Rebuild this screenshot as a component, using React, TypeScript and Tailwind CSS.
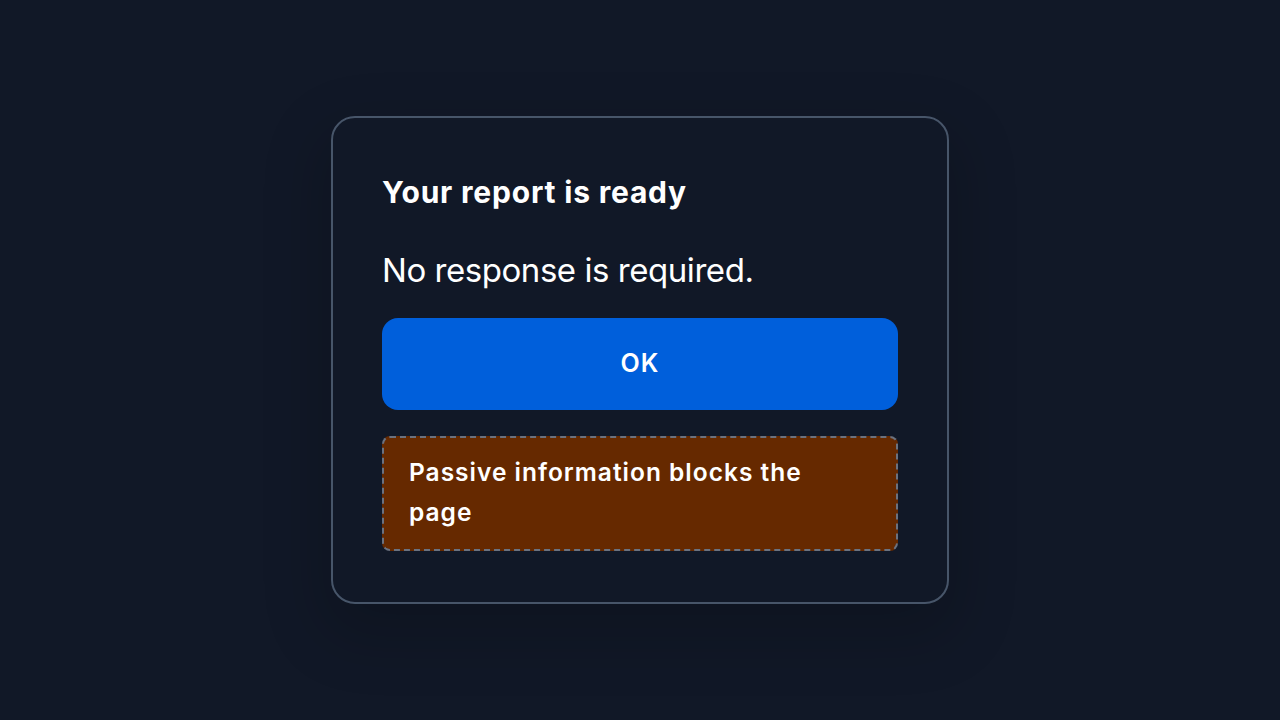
import React from 'react';

const App = () => {
  return (
    <div className="min-h-screen w-full bg-[#111827] flex items-center justify-center font-['Inter',_sans-serif]">
      <div className="w-[618px] rounded-[24px] border-2 border-[#475569] bg-[#111827] px-[49px] pt-[53px] pb-[51px] shadow-[0_24px_60px_12px_rgba(0,0,0,0.16)]">
        <h2 className="text-[30px] leading-[42px] font-bold text-white tracking-[0.8px]">Your report is ready</h2>
        <p className="mt-[35px] text-[33px] leading-[44px] text-white font-normal tracking-[-0.45px]">
          No response is required.
        </p>
        <button
          type="button"
          className="mt-[26px] w-full h-[92px] rounded-[16px] bg-[#005fdb] text-white text-[25px] font-semibold tracking-[1px]"
        >
          OK
        </button>
        <div className="mt-[26px] rounded-[8px] border-2 border-dashed border-[#6b7280] bg-[#662900] pl-[25px] pr-[24px] pt-[14px] pb-[17px]">
          <p className="max-w-[420px] text-[24.5px] leading-[40px] font-semibold text-white tracking-[1px]">
            Passive information blocks the page
          </p>
        </div>
      </div>
    </div>
  );
};

export default App;
